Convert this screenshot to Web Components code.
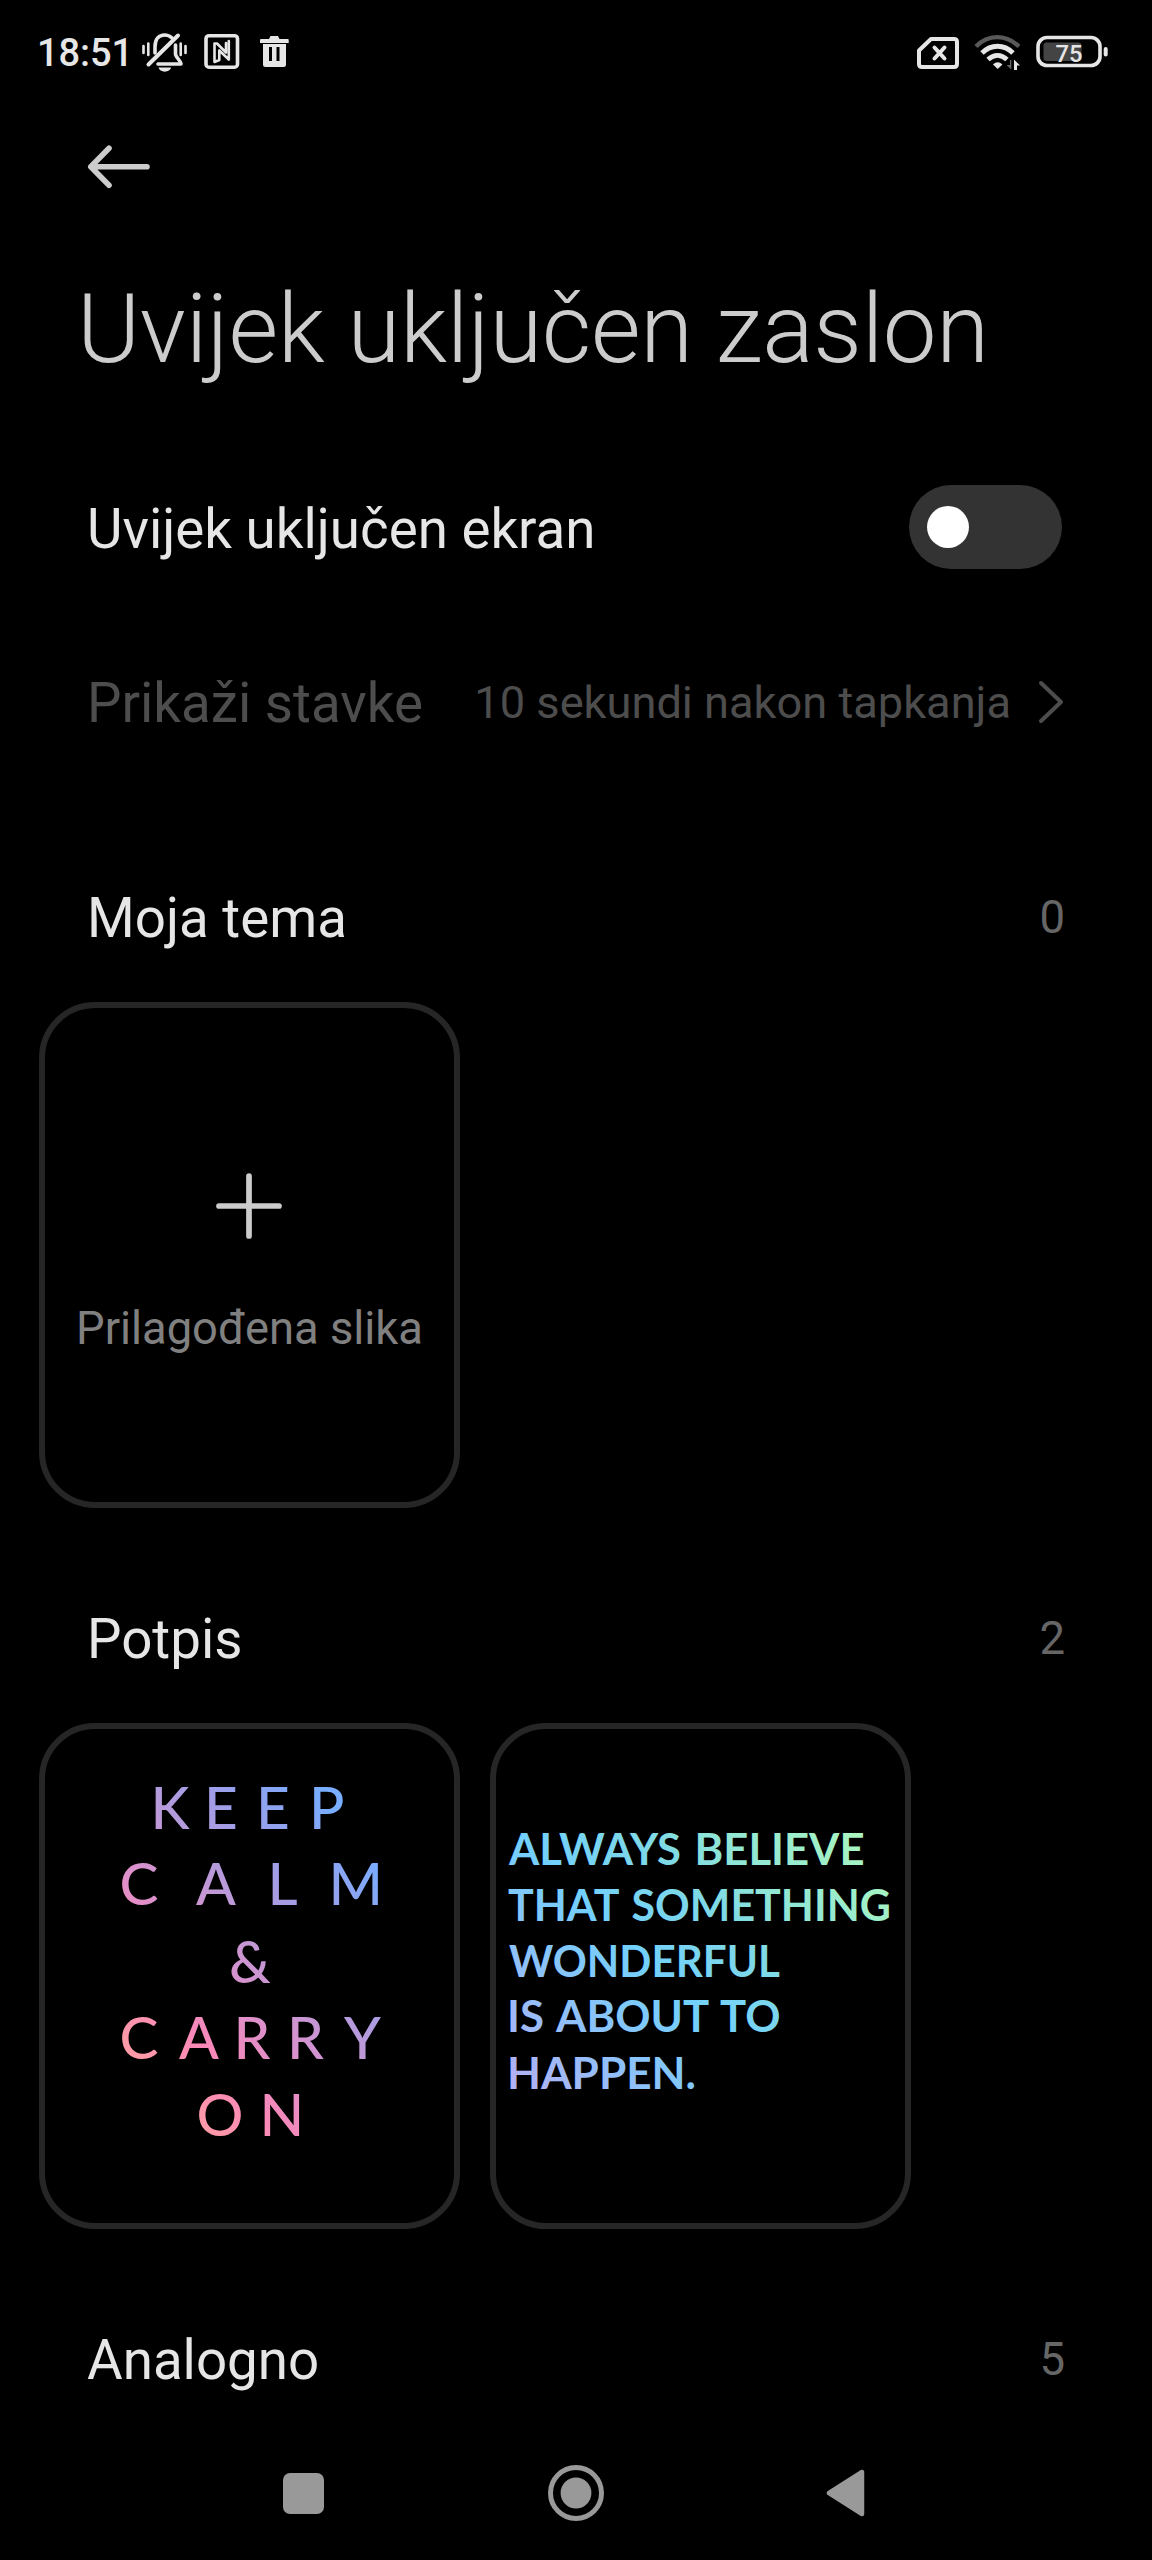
<!DOCTYPE html>
<html lang="hr">
<head>
<meta charset="utf-8">
<title>Uvijek uključen zaslon</title>
<style>
html,body{margin:0;background:#000}
body{width:1152px;height:2560px;overflow:hidden;font-family:Roboto,"Noto Sans",sans-serif;color:#e6e6e6}
</style>
</head>
<body>
<aod-settings></aod-settings>
<script>
const define = (name, html) => customElements.define(name, class extends HTMLElement {
  constructor() {
    super();
    const t = document.createElement('template');
    t.innerHTML = html;
    this.attachShadow({mode: 'open'}).append(t.content.cloneNode(true));
  }
});

define('status-bar', `
<style>
:host{display:flex;justify-content:space-between;height:104px;box-sizing:border-box;padding:0 40px 0 37px}
div{display:flex;align-items:center}
.time{font-size:38px;font-weight:500;line-height:40px;letter-spacing:-.1px;width:105px;padding-top:2px;box-sizing:border-box}
svg{display:block}
</style>
<div>
  <span class="time">18:51</span>
  <svg width="152" height="60" viewBox="142 22 152 60" fill="none" stroke="#e6e6e6" stroke-width="3.6" stroke-linecap="round" stroke-linejoin="round">
    <path d="M155 53V47C155 39 159 35 164.500 35C168 35 170 36 172 38"/>
    <path d="M175.500 45V54C175.500 57 181 61 181 64H158"/>
    <path d="M148.500 64.500L178 35.500" stroke-width="4"/>
    <path d="M158.500 67.500H171C170 73 159.500 73 158.500 67.500Z" fill="#e6e6e6" stroke="none"/>
    <path d="M143.500 46V53M148.300 43.500V55M180.700 43.500V55M185.500 46V53" stroke-width="2.600"/>
    <rect x="206" y="35.700" width="31.500" height="31.500" rx="3"/>
    <path d="M214.500 62V43.500H217L226 52.500M219.300 50.500L228.800 59.500V41M219.300 50.500V60L214.500 62M226 52V43" stroke-width="2.600"/>
    <g fill="#e6e6e6" stroke="none">
      <path d="M261 39H269L270.500 36H278L279.500 39H288Q288.700 39 288.700 40V43H260V40Q260 39 261 39Z"/>
      <path fill-rule="evenodd" d="M263 44H286V64.500Q286 67 283.500 67H265.500Q263 67 263 64.500ZM269 47V61H272V47ZM276.500 47V61H279.500V47Z"/>
    </g>
  </svg>
</div>
<div>
  <svg width="195" height="60" viewBox="917 22 195 60" fill="none" stroke="#e6e6e6" stroke-width="4" stroke-linecap="round" stroke-linejoin="round">
    <path d="M931 39H954Q957 39 957 42V64Q957 67 954 67H922Q919 67 919 64V50.500Z"/>
    <path d="M934.500 47.500L944.500 58.500M944.500 47.500L934.500 58.500"/>
    <path d="M976 46.500C988 34 1006 34 1019 46.500" stroke="#595959" stroke-width="4.400" stroke-linecap="butt"/>
    <path d="M982 53C991 44 1004 44 1013 53" stroke-width="4.800" stroke-linecap="butt"/>
    <path d="M988 59.500C994 54 1001 54 1007 59.500" stroke-width="4.800" stroke-linecap="butt"/>
    <path d="M993 64.500Q997.500 60 1002.500 64.500L997.700 69Z" fill="#e6e6e6" stroke="none"/>
    <path d="M1011.300 60V69.500L1006.500 65H1010V60Z" fill="#666" stroke="none"/>
    <path d="M1014 70V59.500L1020 65.500H1017V70Z" fill="#e6e6e6" stroke="none"/>
    <rect x="1038" y="37.500" width="62" height="28" rx="9" stroke-width="3.600"/>
    <rect x="1043.500" y="42.500" width="38" height="18.500" rx="3" fill="#444" stroke="none"/>
    <path d="M1105.700 49V54.500" stroke-width="4"/>
    <text x="1055.500" y="61.500" font-size="24.500" font-weight="500" fill="#e6e6e6" stroke="none" textLength="27" lengthAdjust="spacingAndGlyphs">75</text>
  </svg>
</div>`);

define('back-bar', `
<style>:host{display:flex;align-items:center;height:125px;padding-left:86px}</style>
<svg width="68" height="50" viewBox="86 142 68 50" fill="none" stroke="#ccc" stroke-width="5.600" stroke-linecap="round" stroke-linejoin="round">
<path d="M147 166.700H91M109 148.200L90.800 166.700L109 185.200"/></svg>`);

define('page-title', `
<style>:host{display:block;height:211px;padding-left:77px;box-sizing:border-box;font-size:96px;font-weight:300;line-height:201px;color:#ccc;white-space:nowrap;letter-spacing:-.34px}</style><slot></slot>`);

define('setting-row', `
<style>
:host{display:flex;align-items:center;justify-content:space-between;box-sizing:border-box;height:174px;padding:0 88px 0 87px;font-size:54.700px;white-space:nowrap}
:host([disabled]){height:177px;color:#4d4d4d}
.label{padding-top:4px}
:host([disabled]) .label{padding-top:0}
.end{display:flex;align-items:center}
</style>
<span class="label"><slot></slot></span><span class="end"><slot name="end"></slot></span>`);

define('toggle-switch', `
<style>
:host{display:flex;align-items:center;box-sizing:border-box;width:153px;height:84px;border-radius:42px;background:#333;padding-left:17.500px;margin-right:2px}
i{width:42px;height:42px;border-radius:50%;background:#fff}
</style><i></i>`);

define('value-link', `
<style>:host{display:flex;align-items:center;gap:27px;font-size:45.200px}</style>
<span><slot></slot></span>
<svg width="26" height="46" viewBox="0 0 26 46" fill="none" stroke="#4d4d4d" stroke-width="4" stroke-linecap="round" stroke-linejoin="round"><path d="M3 3L23 22L3 41"/></svg>`);

define('theme-section', `
<style>
:host{display:block;height:721px}
header{display:flex;align-items:center;justify-content:space-between;height:166px;box-sizing:border-box;padding:0 87px 0 87px;font-size:54.700px}
.name{padding-bottom:3px}
.count{font-size:45.500px;color:#666;padding-bottom:3px}
.cards{display:flex;gap:30px;padding-left:39px}
</style>
<header><span class="name"><slot name="name"></slot></span><span class="count"><slot name="count"></slot></span></header>
<div class="cards"><slot></slot></div>`);

define('theme-card', `
<style>
:host{display:flex;flex-direction:column;align-items:center;box-sizing:border-box;width:421px;height:506px;border:6px solid #262626;border-radius:56px}
</style><slot></slot>`);

define('add-picture', `
<style>
:host{display:flex;flex-direction:column;align-items:center;padding-top:161px;font-size:45.300px;color:#808080;white-space:nowrap}
span{margin-top:56px;line-height:60px}
</style>
<svg width="74" height="74" viewBox="0 0 74 74" stroke="#ccc" stroke-width="5.700" stroke-linecap="round"><path d="M37 7V67M7 37H67"/></svg>
<span><slot></slot></span>`);

define('keep-calm-art', `
<style>:host{display:block}svg{display:block;font-family:Lato,sans-serif;font-size:58.500px;font-weight:500}</style>
<svg width="409" height="494" viewBox="6 6 409 494">
<defs><linearGradient id="g" gradientUnits="userSpaceOnUse" x1="-108" y1="94" x2="125" y2="-109">
<stop offset="0" stop-color="#ff9aa8"/><stop offset=".178" stop-color="#f988b8"/><stop offset=".356" stop-color="#de90ca"/><stop offset=".466" stop-color="#cc95d2"/><stop offset=".6" stop-color="#b49bdc"/><stop offset=".734" stop-color="#a09ee8"/><stop offset=".86" stop-color="#8ca4f2"/><stop offset="1" stop-color="#78adff"/></linearGradient></defs>
<g fill="url(#g)">
<text x="111.500 165 217 270" y="105.600">KEEP</text>
<text x="80.500 157 228.500 289.500" y="182">CALM</text>
<text x="190" y="259.500">&amp;</text>
<text x="80.500 140 194.500 248 305" y="335.700">CARRY</text>
<text x="157.500 220.500" y="412.700">ON</text>
</g></svg>`);

define('always-believe-art', `
<style>:host{display:block}svg{display:block;font-family:Lato,sans-serif;font-size:43.500px;font-weight:700;word-spacing:3px}</style>
<svg width="409" height="494" viewBox="6 6 409 494">
<defs><linearGradient id="g" gradientUnits="userSpaceOnUse" x1="-163" y1="155" x2="135" y2="-128">
<stop offset="0" stop-color="#b0b2f5"/><stop offset=".22" stop-color="#8cc2fa"/><stop offset=".42" stop-color="#72d0fc"/><stop offset=".65" stop-color="#80dae4"/><stop offset=".74" stop-color="#8ee5d8"/><stop offset="1" stop-color="#a8f5c0"/></linearGradient></defs>
<g fill="url(#g)">
<text x="19" y="141.500" textLength="355.500" lengthAdjust="spacingAndGlyphs">ALWAYS BELIEVE</text>
<text x="18" y="198" textLength="383" lengthAdjust="spacingAndGlyphs">THAT SOMETHING</text>
<text x="19" y="253.700" textLength="271" lengthAdjust="spacingAndGlyphs">WONDERFUL</text>
<text x="17" y="309.200" textLength="273.500" lengthAdjust="spacingAndGlyphs">IS ABOUT TO</text>
<text x="17" y="365.700" textLength="189" lengthAdjust="spacingAndGlyphs">HAPPEN.</text>
</g></svg>`);

define('nav-bar', `
<style>:host{display:flex;align-items:center;height:134px;flex:none;background:#000;padding-left:283px}
svg{display:block;fill:#999}.h{margin-left:223.500px}.b{margin-left:222.500px}</style>
<svg width="41" height="41"><rect width="41" height="41" rx="7"/></svg>
<svg class="h" width="56" height="56" viewBox="-28 -28 56 56"><circle r="25.500" fill="none" stroke="#999" stroke-width="5"/><circle r="15.400"/></svg>
<svg class="b" width="39" height="48" viewBox="0 0 39 48"><path d="M3 24L36 3V45Z" stroke="#999" stroke-width="4.500" stroke-linejoin="round"/></svg>`);

define('aod-settings', `
<style>
:host{display:flex;flex-direction:column;width:1152px;height:2560px;background:#000}
main{flex:1;min-height:0;overflow:hidden}
.first{margin-top:45px}
</style>
<main>
<status-bar></status-bar>
<back-bar></back-bar>
<page-title>Uvijek uključen zaslon</page-title>
<setting-row>Uvijek uključen ekran<toggle-switch slot="end"></toggle-switch></setting-row>
<setting-row disabled>Prikaži stavke<value-link slot="end">10 sekundi nakon tapkanja</value-link></setting-row>
<theme-section class="first"><span slot="name">Moja tema</span><span slot="count">0</span>
<theme-card><add-picture>Prilagođena slika</add-picture></theme-card></theme-section>
<theme-section><span slot="name">Potpis</span><span slot="count">2</span>
<theme-card><keep-calm-art></keep-calm-art></theme-card><theme-card><always-believe-art></always-believe-art></theme-card></theme-section>
<theme-section><span slot="name">Analogno</span><span slot="count">5</span></theme-section>
</main>
<nav-bar></nav-bar>`);
</script>
</body>
</html>
